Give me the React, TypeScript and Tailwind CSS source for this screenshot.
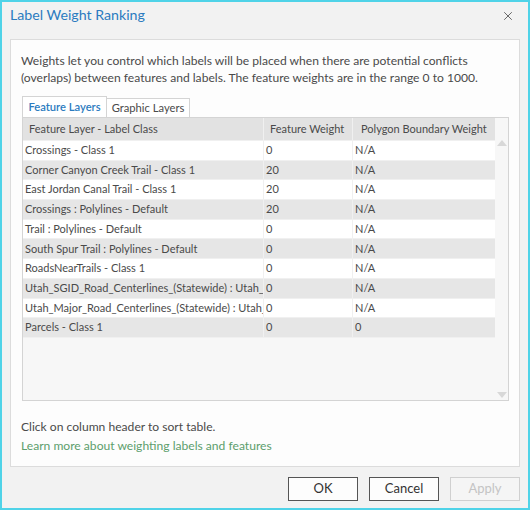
import { X } from "lucide-react";

const rows: [string, string, string][] = [
  ["Crossings - Class 1", "0", "N/A"],
  ["Corner Canyon Creek Trail - Class 1", "20", "N/A"],
  ["East Jordan Canal Trail - Class 1", "20", "N/A"],
  ["Crossings : Polylines - Default", "20", "N/A"],
  ["Trail : Polylines - Default", "0", "N/A"],
  ["South Spur Trail : Polylines - Default", "0", "N/A"],
  ["RoadsNearTrails - Class 1", "0", "N/A"],
  ["Utah_SGID_Road_Centerlines_(Statewide) : Utah_SGID_Road_Centerlines", "0", "N/A"],
  ["Utah_Major_Road_Centerlines_(Statewide) : Utah_Major_Roads", "0", "N/A"],
  ["Parcels - Class 1", "0", "0"],
];

export default function App() {
  return (
    <div
      className="w-[530px] h-[510px] bg-[#f2f2f2] border-2 border-[#4fd3e8] flex flex-col text-[12.1px] text-[#4a4a4a]"
      style={{ fontFamily: 'Lato, "Noto Sans", sans-serif' }}
    >
      {/* Title bar */}
      <div className="h-[37px] flex items-start justify-between pl-[8px] pr-[13px] pt-[2px]">
        <span className="text-[14.2px] text-[#2b7bc0]">Label Weight Ranking</span>
        <X size={14} strokeWidth={1.5} className="text-[#555] mt-[5px]" />
      </div>

      {/* Content panel */}
      <div className="mx-[8px] h-[428px] bg-[#fdfdfd] border border-[#dcdcdc] flex flex-col px-[10px]">
        <p className="pt-[12px] leading-[17px] whitespace-nowrap">
          Weights let you control which labels will be placed when there are potential conflicts
          <br />
          (overlaps) between features and labels. The feature weights are in the range 0 to 1000.
        </p>

        {/* Tabs */}
        <div className="mt-[10px] flex items-end h-[21px] pl-[1px] whitespace-nowrap text-[11.2px]">
          <div className="h-[21px] w-[85px] border border-b-0 border-[#d4d4d4] bg-white flex items-center justify-center font-semibold text-[#2b7bc0]">
            Feature Layers
          </div>
          <div className="h-[19px] w-[83px] border border-l-0 border-b-0 border-[#d4d4d4] bg-white flex items-center justify-center text-[#4a4a4a]">
            Graphic Layers
          </div>
        </div>

        {/* Table */}
        <div className="ml-[1px] w-[487px] h-[284px] border border-[#d4d4d4] bg-[#f7f7f7] flex whitespace-nowrap text-[11px]">
          <div className="w-[472px] flex flex-col">
            <div className="h-[23px] flex bg-[#e2e2e2] border-b border-[#f0f0f0]">
              <div className="w-[241px] pl-[6px] flex items-center border-r border-[#f0f0f0]">
                Feature Layer - Label Class
              </div>
              <div className="w-[89px] pl-[6px] flex items-center border-r border-[#f0f0f0]">
                Feature Weight
              </div>
              <div className="flex-1 pl-[8px] flex items-center">Polygon Boundary Weight</div>
            </div>
            {rows.map(([name, w, p], i) => (
              <div
                key={name}
                className={`h-[19.7px] flex border-b border-[#f0f0f0] ${i % 2 === 0 ? "bg-white" : "bg-[#e6e6e6]"}`}
              >
                <div className="w-[241px] pl-[2px] flex items-center border-r border-[#f0f0f0] overflow-hidden">
                  {name}
                </div>
                <div className="w-[89px] pl-[2px] flex items-center border-r border-[#f0f0f0]">{w}</div>
                <div className="flex-1 pl-[2px] flex items-center">{p}</div>
              </div>
            ))}
          </div>
          {/* Scrollbar */}
          <div className="flex-1 flex flex-col items-center justify-between pt-[22px] pb-[2px]">
            <span className="w-0 h-0 border-l-[5px] border-r-[5px] border-b-[6px] border-l-transparent border-r-transparent border-b-[#d8d8d8]" />
            <span className="w-0 h-0 border-l-[5px] border-r-[5px] border-t-[6px] border-l-transparent border-r-transparent border-t-[#d8d8d8]" />
          </div>
        </div>

        <div className="mt-[16px] leading-[19px]">
          <div>Click on column header to sort table.</div>
          <div className="text-[#5c9e6c]">Learn more about weighting labels and features</div>
        </div>
      </div>

      {/* Buttons */}
      <div className="flex justify-end gap-[11px] mx-[8px] mt-[10px] text-[13px]">
        <button className="w-[70px] h-[24px] border border-[#555] bg-[#fdfdfd] text-[#333]">OK</button>
        <button className="w-[70px] h-[24px] border border-[#555] bg-[#fdfdfd] text-[#333]">Cancel</button>
        <button className="w-[70px] h-[24px] border border-[#d0d0d0] bg-[#f5f5f5] text-[#c4c4c4]">Apply</button>
      </div>
    </div>
  );
}
